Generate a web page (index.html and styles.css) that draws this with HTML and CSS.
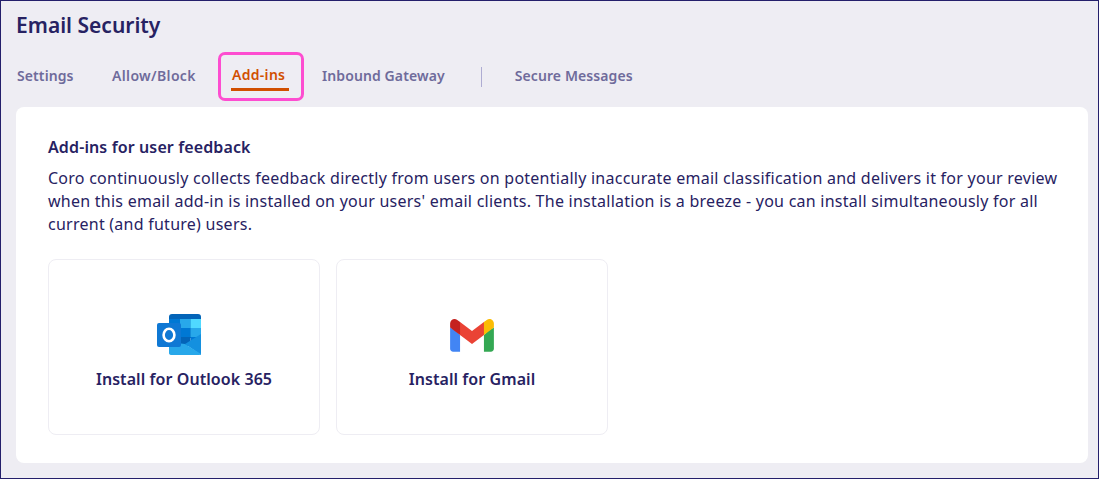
FILE: index.html
```html
<!DOCTYPE html>
<html lang="en">
<head>
    <meta charset="UTF-8">
    <title>Email Security</title>
    <link rel="stylesheet" href="styles.css">
</head>
<body>
    <div class="page">
        <h1>Email Security</h1>
        <nav class="tabs">
            <a class="tab">Settings</a>
            <a class="tab">Allow/Block</a>
            <a class="tab active">Add-ins</a>
            <a class="tab">Inbound Gateway</a>
            <span class="tab-divider"></span>
            <a class="tab">Secure Messages</a>
        </nav>
        <main class="panel">
            <h2>Add-ins for user feedback</h2>
            <p>Coro continuously collects feedback directly from users on potentially inaccurate email classification and delivers it for your review when this email add-in is installed on your users' email clients. The installation is a breeze - you can install simultaneously for all current (and future) users.</p>
            <div class="installs">
                <div class="install-card">
                    <div class="logo">
                        <svg class="logo-outlook" width="54" height="42" viewBox="0 0 54 42">
                            <path d="M12 3 Q12 0 15 0 H41 Q44 0 44 3 V24 H12 Z" fill="#0364b8"/>
                            <rect x="12" y="5" width="11" height="9" fill="#0078d4"/>
                            <rect x="23" y="5" width="10.500" height="9" fill="#28a8ea"/>
                            <rect x="33.500" y="5" width="10.500" height="9" fill="#50d9ff"/>
                            <rect x="12" y="14" width="11" height="9" fill="#0364b8"/>
                            <rect x="23" y="14" width="10.500" height="9" fill="#0078d4"/>
                            <rect x="33.500" y="14" width="10.500" height="9" fill="#28a8ea"/>
                            <rect x="12" y="23" width="11" height="9" fill="#064a8c"/>
                            <rect x="23" y="23" width="10.500" height="9" fill="#0364b8"/>
                            <rect x="33.500" y="23" width="10.500" height="9" fill="#0078d4"/>
                            <path d="M44 20 V41 L28 30 Z" fill="#1490df"/>
                            <path d="M12 28 L28 30 L44 40 Q44 41 42 41 H15 Q12 41 12 39 Z" fill="#28a8ea"/>
                            <rect x="0" y="9" width="24" height="24" rx="2" fill="#0f78d4"/>
                            <ellipse cx="12" cy="21" rx="5.400" ry="6.300" fill="none" stroke="#fff" stroke-width="2.600"/>
                        </svg>
                    </div>
                    <span>Install for Outlook 365</span>
                </div>
                <div class="install-card">
                    <div class="logo">
                        <svg width="44" height="33" viewBox="0 0 256 193">
                            <path d="M58.180 192.050V93.140L27.500 65.070 0 49.500v125.090c0 9.660 7.820 17.460 17.450 17.460z" fill="#4285f4"/>
                            <path d="M197.820 192.050h40.730c9.660 0 17.450-7.830 17.450-17.450V49.500l-31.160 17.840-27.020 25.800z" fill="#34a853"/>
                            <path d="M58.180 93.140l-4.170-38.650 4.170-36.990L128 69.870l69.820-52.370 4.670 34.990-4.670 40.650L128 145.500z" fill="#ea4335"/>
                            <path d="M197.820 17.500V93.140L256 49.500V26.230c0-21.580-24.640-33.880-41.890-20.940z" fill="#fbbc04"/>
                            <path d="M0 49.500l26.760 20.070L58.180 93.140V17.500L41.890 5.290C24.610-7.650 0 4.650 0 26.230z" fill="#c5221f"/>
                        </svg>
                    </div>
                    <span>Install for Gmail</span>
                </div>
            </div>
        </main>
    </div>
</body>
</html>
```
FILE: styles.css
```css
* {
    box-sizing: border-box;
}

body {
    font-family: "Noto Sans", sans-serif;
    margin: 0;
    background: #eeedf3;
    color: #272262;
}

.page {
    height: 479px;
    border: 1px solid #241f6b;
    padding: 0 10px 15px 15px;
}

h1 {
    margin: 0;
    padding-top: 10px;
    font-size: 21px;
    line-height: 29px;
    font-weight: 600;
}

.tabs {
    display: flex;
    align-items: center;
    height: 67px;
    padding: 6px 0 0 1px;
}

.tab {
    padding-bottom: 2px;
    font-size: 14px;
    font-weight: 600;
    letter-spacing: 0.1px;
    color: #6f6b9b;
}

.tabs .tab:nth-child(1) {
    width: 57px;
    margin-right: 38px;
}

.tabs .tab:nth-child(2) {
    width: 83px;
    margin-right: 23px;
    letter-spacing: 0.35px;
}

.tabs .tab:nth-child(4) {
    margin-left: 18px;
}

.tabs .active {
    color: #d14f00;
    padding: 3px 0 0 11px;
    width: 86px;
    height: 49px;
    line-height: 34px;
    letter-spacing: 0.3px;
    border: 3px solid #fd4dd0;
    border-radius: 7px;
    position: relative;
}

.active::after {
    content: "";
    position: absolute;
    left: 10px;
    right: 12px;
    bottom: 7px;
    height: 3px;
    background: #d14f00;
}

.tab-divider {
    width: 1px;
    height: 20px;
    background: #aeacd2;
    margin: 0 33px 0 36px;
}

.panel {
    background: #fff;
    border-radius: 8px;
    height: 356px;
    padding: 28px 24px 28px 32px;
}

h2 {
    margin: 0 0 8px;
    font-size: 16px;
    line-height: 24px;
    font-weight: 600;
    letter-spacing: 0.12px;
}

p {
    margin: 0;
    font-size: 16px;
    line-height: 23px;
    letter-spacing: 0.25px;
}

.installs {
    display: flex;
    gap: 16px;
    margin-top: 23px;
}

.install-card {
    width: 272px;
    height: 176px;
    border: 1px solid #eeedf3;
    border-radius: 8px;
    display: flex;
    flex-direction: column;
    align-items: center;
    padding-top: 54px;
    font-size: 16px;
    line-height: 24px;
    font-weight: 600;
    letter-spacing: 0.07px;
}

.logo {
    height: 42px;
    margin-bottom: 11px;
    display: flex;
    align-items: center;
}
```
